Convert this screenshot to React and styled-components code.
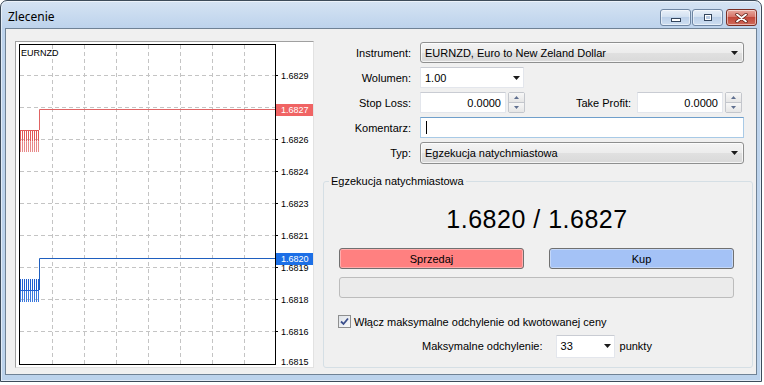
import React from 'react';
import styled, { createGlobalStyle } from 'styled-components';

const GlobalStyle = createGlobalStyle`
  html, body { margin: 0; padding: 0; background: #ffffff; }
  body { font-family: "Liberation Sans", Arial, sans-serif; font-size: 11px; color: #000; }
  * { box-sizing: border-box; }
`;

const Window = styled.div`
  width: 762px;
  height: 382px;
  border: 1px solid #3d4b5a;
  border-radius: 7px 7px 0 0;
  background: linear-gradient(to bottom, #d5e3f3 0px, #bdd3ec 27px, #bcd3ec 100%);
  display: flex;
  flex-direction: column;
  padding: 0 4px 6px 4px;
  box-shadow: inset 0 0 0 1px rgba(255, 255, 255, 0.55);
`;

const TitleBar = styled.div`
  height: 27px;
  display: flex;
  align-items: flex-start;
  padding-left: 3px;
`;

const Title = styled.span`
  font-family: "Noto Sans", "Liberation Sans", sans-serif;
  font-size: 12px;
  line-height: 16px;
  margin-top: 8px;
  color: #000;
`;

const Caption = styled.div`
  margin-left: auto;
  margin-top: 8px;
  display: flex;
  gap: 1px;
`;

const CapBtn = styled.div`
  width: ${(p) => p.$w}px;
  height: 17px;
  margin-left: ${(p) => (p.$close ? 2 : 0)}px;
  border: 1px solid ${(p) => (p.$close ? '#7a2e24' : '#6f86a3')};
  border-radius: 3px;
  display: flex;
  align-items: center;
  justify-content: center;
  background: ${(p) =>
    p.$close
      ? 'linear-gradient(to bottom, #e8a89d 0%, #d7756a 45%, #c2483a 50%, #cf6a5a 100%)'
      : 'linear-gradient(to bottom, #e9f0f9 0%, #d3e1f1 45%, #bcd0e9 50%, #cfdff1 100%)'};
  box-shadow: inset 0 0 0 1px rgba(255, 255, 255, 0.5);
`;

const MinGlyph = styled.span`
  width: 10px;
  height: 4px;
  margin-top: 4px;
  background: #fff;
  border: 1px solid #34465e;
`;

const MaxGlyph = styled.span`
  width: 8px;
  height: 7px;
  background: #b9cbe3;
  border: 1px solid #34465e;
  box-shadow: inset 0 0 0 1px #fff;
`;

const CloseGlyph = () => (
  <svg width="13" height="10" viewBox="0 0 13 10">
    <path d="M2 1.5 L11 8.5 M11 1.5 L2 8.5" stroke="#5a1c12" strokeWidth="3.4" strokeLinecap="round" />
    <path d="M2 1.5 L11 8.5 M11 1.5 L2 8.5" stroke="#ffffff" strokeWidth="1.9" strokeLinecap="round" />
  </svg>
);

const Client = styled.div`
  flex: 1;
  display: flex;
  border: 1px solid #6f8295;
  background: #f0f0f0;
  padding: 12px 3px 6px 9px;
`;

const ChartFrame = styled.div`
  width: 299px;
  flex: none;
  border: 1px solid;
  border-color: #a0a0a0 #e2e2e2 #e2e2e2 #a0a0a0;
  background: #ffffff;
  display: flex;
`;

const Form = styled.div`
  width: 430px;
  margin-left: 9px;
  display: flex;
  flex-direction: column;
  gap: 4px;
  padding-top: 1px;
`;

const Row = styled.div`
  display: grid;
  grid-template-columns: 88px 1fr;
  column-gap: 9px;
  align-items: center;
  padding-right: 9px;
  height: ${(p) => p.$h || 21}px;
`;

const Label = styled.span`
  text-align: right;
  white-space: nowrap;
`;

const Combo = styled.div`
  height: ${(p) => p.$h || 21}px;
  width: ${(p) => (p.$w ? `${p.$w}px` : 'auto')};
  display: flex;
  align-items: center;
  justify-content: space-between;
  padding: 0 ${(p) => p.$pr ?? 5}px 0 4px;
  white-space: nowrap;
  border: 1px solid ${(p) => (p.$flat ? '#e3e6ec' : '#8e8f8f')};
  border-top-color: ${(p) => (p.$flat ? '#c9ccd3' : '#8e8f8f')};
  border-radius: ${(p) => (p.$flat ? '1px' : '3px')};
  background: ${(p) =>
    p.$flat ? '#ffffff' : 'linear-gradient(to bottom, #f4f4f4 0%, #ececec 50%, #e0e0e0 52%, #d9d9d9 100%)'};
  box-shadow: ${(p) => (p.$flat ? 'none' : 'inset 0 0 0 1px rgba(255,255,255,0.7)')};
`;

const Arrow = () => (
  <svg width="7" height="4" viewBox="0 0 7 4">
    <path d="M0 0 H7 L3.5 4 Z" fill="#1a1a1a" />
  </svg>
);

const Edit = styled.div`
  height: 21px;
  flex: ${(p) => (p.$w ? 'none' : 1)};
  width: ${(p) => (p.$w ? `${p.$w}px` : 'auto')};
  display: flex;
  align-items: center;
  justify-content: ${(p) => (p.$right ? 'flex-end' : 'flex-start')};
  padding: 0 4px 0 5px;
  background: #ffffff;
  border: 1px solid ${(p) => (p.$focus ? '#a9cae6' : '#e3e6ec')};
  border-top-color: ${(p) => (p.$focus ? '#6f9fcb' : '#c9ccd3')};
`;

const Caret = styled.span`
  width: 1px;
  height: 13px;
  background: #000;
`;

const SpinGroup = styled.div`
  display: flex;
  align-items: center;
  gap: 2px;
  margin-right: ${(p) => p.$mr || 0}px;
`;

const Spin = styled.div`
  width: 17px;
  height: 21px;
  display: flex;
  flex-direction: column;
  border: 1px solid #c3c6cc;
  border-radius: 2px;
  background: #fafafa;
`;

const SpinBtn = styled.div`
  flex: 1;
  display: flex;
  align-items: center;
  justify-content: center;
  background: linear-gradient(to bottom, #f7f7f7, #e6e6e6);
  border-top: ${(p) => (p.$down ? '1px solid #c3c6cc' : 'none')};
`;

const SpinArrow = ({ down }) => (
  <svg width="5" height="3" viewBox="0 0 5 3">
    <path d={down ? 'M0 0 H5 L2.5 3 Z' : 'M0 3 H5 L2.5 0 Z'} fill="#5f6f8f" />
  </svg>
);

const StopRow = styled.div`
  display: flex;
  align-items: center;
`;

const SideLabel = styled.span`
  flex: 1;
  text-align: right;
  padding-right: 6px;
  white-space: nowrap;
`;

const Group = styled.fieldset`
  flex: 1;
  margin: 6px 0 0 0;
  padding: 0;
  min-width: 0;
  border: 1px solid #d5dfe5;
  border-radius: 3px;
  display: flex;
  flex-direction: column;
`;

const Legend = styled.legend`
  margin-left: 5px;
  padding: 0 2px;
  line-height: 14px;
`;

const GroupBody = styled.div`
  display: flex;
  flex-direction: column;
  padding: 0 17px 0 15px;
`;

const Price = styled.div`
  margin-top: 16px;
  height: 30px;
  line-height: 30px;
  text-align: center;
  font-size: 25px;
  letter-spacing: 0.5px;
  color: #000;
`;

const Buttons = styled.div`
  margin-top: 14px;
  display: grid;
  grid-template-columns: 185px 185px;
  column-gap: 25px;
`;

const TradeButton = styled.div`
  height: 21px;
  display: flex;
  align-items: center;
  justify-content: center;
  border: 1px solid #707070;
  border-radius: 3px;
  background: ${(p) => (p.$tone === 'sell' ? '#ff8080' : '#a4c2f6')};
  box-shadow: inset 0 0 0 1px rgba(255, 255, 255, 0.35);
`;

const Bar = styled.div`
  margin-top: 8px;
  height: 21px;
  width: 395px;
  border: 1px solid #bcbcbc;
  border-radius: 3px;
  background: #ebebeb;
`;

const CheckRow = styled.div`
  margin-top: 16px;
  height: 15px;
  display: flex;
  align-items: center;
  gap: 3px;
  margin-left: -1px;
`;

const CheckBox = styled.div`
  width: 13px;
  height: 13px;
  border: 1px solid #8e8f8f;
  background: linear-gradient(135deg, #dfe3e8 0%, #f8f9fb 100%);
  display: flex;
  align-items: center;
  justify-content: center;
`;

const MaxRow = styled.div`
  margin-top: 5px;
  height: 24px;
  display: flex;
  align-items: center;
  justify-content: center;
`;

const Gap = styled.span`
  width: ${(p) => p.$w}px;
  flex: none;
`;

const gridX = [36.5, 68.5, 100.5, 132.5, 164.5, 196.5, 228.5];
const gridY = [33.5, 65.5, 97.5, 129.5, 161.5, 193.5, 225.5, 257.5, 289.5];
const axis = [
  { y: 33.5, t: '1.6829' },
  { y: 97.5, t: '1.6826' },
  { y: 129.5, t: '1.6824' },
  { y: 161.5, t: '1.6823' },
  { y: 193.5, t: '1.6821' },
  { y: 225.5, t: '1.6819' },
  { y: 257.5, t: '1.6818' },
  { y: 289.5, t: '1.6816' },
  { y: 319.5, t: '1.6815' },
];
const barsX = Array.from({ length: 10 }, (_, i) => 4.5 + i * 2);

const Chart = () => (
  <svg width="297" height="325" viewBox="0 0 297 325" style={{ display: 'block' }}>
    {gridX.map((x) => (
      <line key={`v${x}`} x1={x} y1={3} x2={x} y2={322} stroke="#c4c4c4" strokeDasharray="4 3" />
    ))}
    {gridY.map((y) => (
      <line key={`h${y}`} x1={4} y1={y} x2={259} y2={y} stroke="#c4c4c4" strokeDasharray="4 3" />
    ))}
    <rect x="3.5" y="2.5" width="256" height="320" fill="none" stroke="#000" />
    <text x="5" y="14" fontSize="9" fontFamily="Liberation Sans, Arial, sans-serif" fill="#000">EURNZD</text>
    {gridY.map((y) => (
      <line key={`t${y}`} x1={259} y1={y} x2={262} y2={y} stroke="#000" />
    ))}
    {axis.map((a) => (
      <text key={a.t} x="265" y={a.y + 3.3} fontSize="9" fontFamily="Liberation Sans, Arial, sans-serif" fill="#000">
        {a.t}
      </text>
    ))}
    {/* ask history */}
    {barsX.map((x) => (
      <line key={`r${x}`} x1={x} y1={88} x2={x} y2={99.5} stroke="#e05858" />
    ))}
    {barsX.map((x) => (
      <line key={`r2${x}`} x1={x} y1={99.5} x2={x} y2={110} stroke="#e88a8a" />
    ))}
    <line x1="4" y1="88.5" x2="23" y2="88.5" stroke="#e05858" />
    <path d="M23.5 88 V67.5 H259" fill="none" stroke="#e06464" />
    <rect x="260" y="62" width="37" height="12" fill="#f06464" />
    <text x="265" y="71.3" fontSize="9" fontFamily="Liberation Sans, Arial, sans-serif" fill="#ffffff">1.6827</text>
    {/* bid history */}
    {barsX.map((x) => (
      <line key={`b${x}`} x1={x} y1={237} x2={x} y2={248} stroke="#1f5fcf" />
    ))}
    {barsX.map((x) => (
      <line key={`b2${x}`} x1={x} y1={248} x2={x} y2={260} stroke="#3a78dc" />
    ))}
    <line x1="4" y1="248.5" x2="23" y2="248.5" stroke="#1f5fcf" />
    <path d="M23.5 248 V216.5 H259" fill="none" stroke="#1f5fbf" />
    <rect x="260" y="211" width="37" height="12" fill="#1c6fe6" />
    <text x="265" y="220.3" fontSize="9" fontFamily="Liberation Sans, Arial, sans-serif" fill="#ffffff">1.6820</text>
  </svg>
);

const SpinControl = () => (
  <Spin>
    <SpinBtn>
      <SpinArrow />
    </SpinBtn>
    <SpinBtn $down>
      <SpinArrow down />
    </SpinBtn>
  </Spin>
);

export default function App() {
  return (
    <>
      <GlobalStyle />
      <Window>
        <TitleBar>
          <Title>Zlecenie</Title>
          <Caption>
            <CapBtn $w={31}>
              <MinGlyph />
            </CapBtn>
            <CapBtn $w={31}>
              <MaxGlyph />
            </CapBtn>
            <CapBtn $w={31} $close>
              <CloseGlyph />
            </CapBtn>
          </Caption>
        </TitleBar>
        <Client>
          <ChartFrame>
            <Chart />
          </ChartFrame>
          <Form>
            <Row>
              <Label>Instrument:</Label>
              <Combo $pr={5}>
                <span>EURNZD, Euro to New Zeland Dollar</span>
                <Arrow />
              </Combo>
            </Row>
            <Row>
              <Label>Wolumen:</Label>
              <Combo $flat $w={104} $pr={3}>
                <span>1.00</span>
                <Arrow />
              </Combo>
            </Row>
            <Row>
              <Label>Stop Loss:</Label>
              <StopRow>
                <SpinGroup>
                  <Edit $w={86} $right>0.0000</Edit>
                  <SpinControl />
                </SpinGroup>
                <SideLabel>Take Profit:</SideLabel>
                <SpinGroup $mr={2}>
                  <Edit $w={86} $right>0.0000</Edit>
                  <SpinControl />
                </SpinGroup>
              </StopRow>
            </Row>
            <Row>
              <Label>Komentarz:</Label>
              <Edit $focus>
                <Caret />
              </Edit>
            </Row>
            <Row $h={22}>
              <Label>Typ:</Label>
              <Combo $h={22} $pr={5}>
                <span>Egzekucja natychmiastowa</span>
                <Arrow />
              </Combo>
            </Row>
            <Group>
              <Legend>Egzekucja natychmiastowa</Legend>
              <GroupBody>
                <Price>1.6820 / 1.6827</Price>
                <Buttons>
                  <TradeButton $tone="sell">Sprzedaj</TradeButton>
                  <TradeButton $tone="buy">Kup</TradeButton>
                </Buttons>
                <Bar />
                <CheckRow>
                  <CheckBox>
                    <svg width="9" height="9" viewBox="0 0 9 9">
                      <path d="M1 4.5 L3.5 7 L8 1.5" fill="none" stroke="#3b4f8c" strokeWidth="1.8" />
                    </svg>
                  </CheckBox>
                  <span>Włącz maksymalne odchylenie od kwotowanej ceny</span>
                </CheckRow>
                <MaxRow>
                  <span>Maksymalne odchylenie:</span>
                  <Gap $w={13} />
                  <Combo $flat $w={59} $h={23} $pr={3}>
                    <span>33</span>
                    <Arrow />
                  </Combo>
                  <Gap $w={5} />
                  <span>punkty</span>
                </MaxRow>
              </GroupBody>
            </Group>
          </Form>
        </Client>
      </Window>
    </>
  );
}
